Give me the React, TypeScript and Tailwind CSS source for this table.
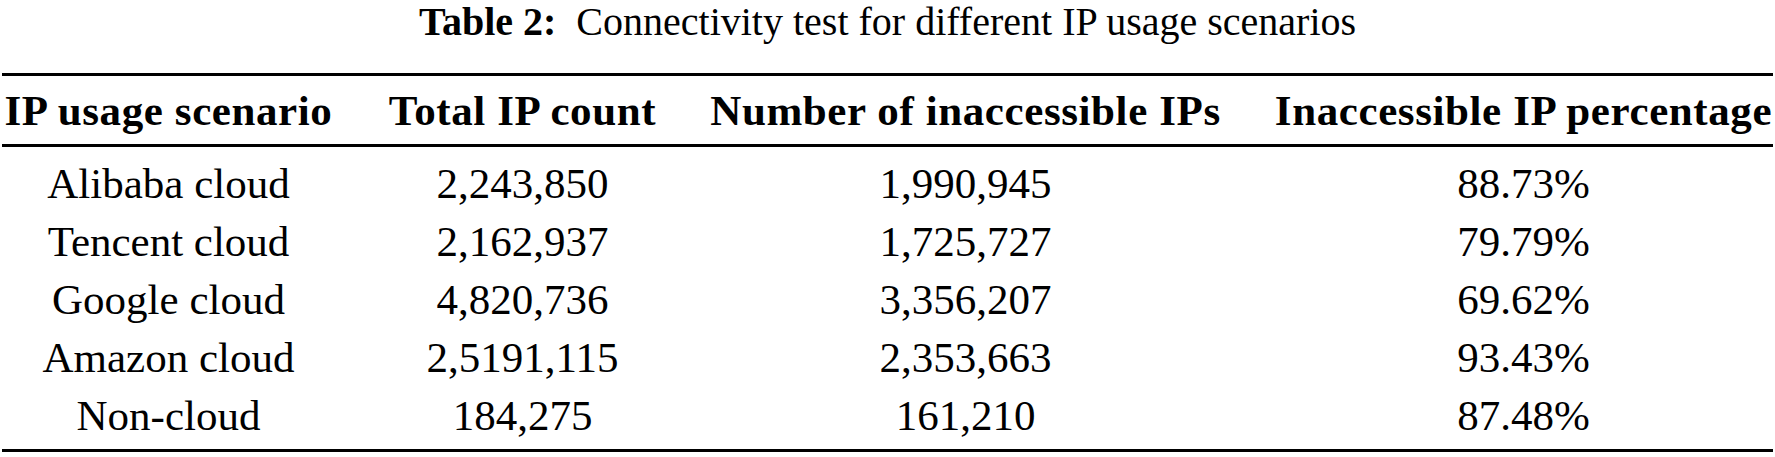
import React from 'react';

const rows = [
  ['Alibaba cloud', '2,243,850', '1,990,945', '88.73%'],
  ['Tencent cloud', '2,162,937', '1,725,727', '79.79%'],
  ['Google cloud', '4,820,736', '3,356,207', '69.62%'],
  ['Amazon cloud', '2,5191,115', '2,353,663', '93.43%'],
  ['Non-cloud', '184,275', '161,210', '87.48%'],
];

const headers = ['IP usage scenario', 'Total IP count', 'Number of inaccessible IPs', 'Inaccessible IP percentage'];

const grid = 'grid grid-cols-[333px_269px_511px_499px] gap-x-[53px]';

const App: React.FC = () => {
  return (
    <div
      className="w-[1775px] h-[457px] bg-white text-black overflow-hidden"
      style={{ fontFamily: '"Liberation Serif", "Times New Roman", serif' }}
    >
      <div className="text-center text-[40px] leading-[44px] whitespace-nowrap">
        <span className="font-bold">Table 2:</span>
        <span className="ml-[20px]">Connectivity test for different IP usage scenarios</span>
      </div>

      <div className="mt-[29px] ml-[2px] w-[1771px]">
        <div className={`${grid} border-t-[3px] border-b-[3px] border-black pt-[2px] text-[43px] leading-[66px] font-bold tracking-[0.6px]`}>
          {headers.map((h) => (
            <div key={h} className="text-center whitespace-nowrap">{h}</div>
          ))}
        </div>

        <div className="pt-[8px] pb-[4px] border-b-[3px] border-black text-[43px] leading-[58px]">
          {rows.map((r) => (
            <div key={r[0]} className={grid}>
              {r.map((c, i) => (
                <div key={i} className="text-center whitespace-nowrap">{c}</div>
              ))}
            </div>
          ))}
        </div>
      </div>
    </div>
  );
};

export default App;
